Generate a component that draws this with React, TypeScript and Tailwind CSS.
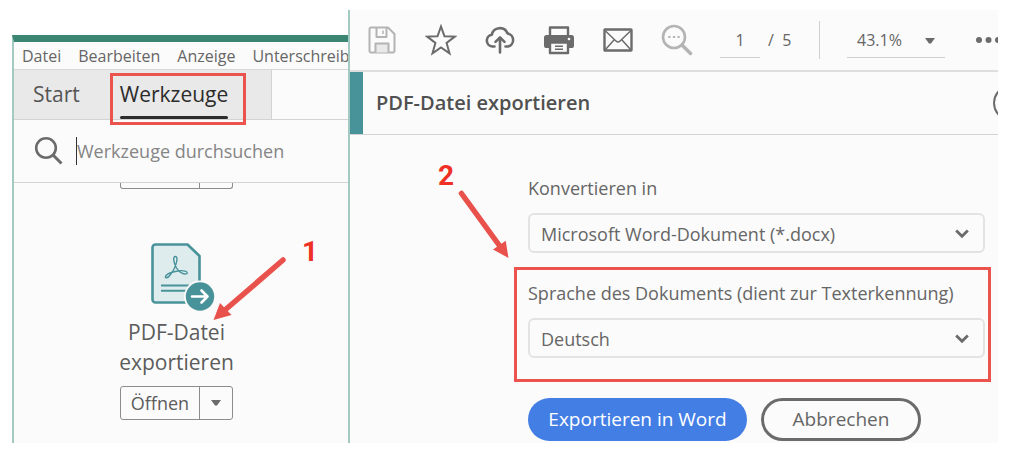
import { useState, type ReactNode } from "react";

interface ISelectProps {
  id: string
  options: string[]
}

const menuItems = ["Datei", "Bearbeiten", "Anzeige", "Unterschreiben"]

const ToolButton = ({ label, children }: { label: string, children: ReactNode }) => (
  <button type="button" aria-label={label} className="flex h-8 w-8 shrink-0 items-center justify-center">
    {children}
  </button>
)

const SaveIcon = () => (
  <svg width="28" height="28" viewBox="0 0 28 28" fill="none" stroke="#b4b4b4" strokeWidth="2" strokeLinejoin="round">
    <path d="M1.5 3a1.5 1.5 0 0 1 1.5-1.5h17L26.5 8v17a1.5 1.5 0 0 1-1.5 1.5H3A1.5 1.5 0 0 1 1.500 25z" />
    <path d="M8.500 1.500v9.500h10v-9.500" />
    <path d="M15 4.500v3.500" strokeWidth="1.500" />
    <path d="M7.500 26.500v-9h13v9" fill="#e9e9e9" />
  </svg>
)

const StarIcon = () => (
  <svg width="32" height="32" viewBox="0 0 32 32" fill="none" stroke="#6b6b6b" strokeWidth="2">
    <path d="M16 2.500l3.500 9.800 10.300.3-8.200 6.400 2.900 10.300L16 23.400l-8.500 5.900 2.900-10.300-8.200-6.400 10.300-.3z" />
  </svg>
)

const CloudIcon = () => (
  <svg width="30" height="28" viewBox="0 0 30 28" fill="none" stroke="#6b6b6b" strokeWidth="2.600" strokeLinecap="round" strokeLinejoin="round">
    <path d="M9.500 20.500H7.200A5.900 5.900 0 0 1 6.800 8.800 8.200 8.200 0 0 1 22.500 7.400a6.700 6.700 0 0 1 .6 13.100H20.500" />
    <path d="M15 26.500V12M10.500 15.800L15 11.300l4.500 4.500" />
  </svg>
)

const PrintIcon = () => (
  <svg width="30" height="30" viewBox="0 0 30 30">
    <path d="M6 10V2.500h18V10" fill="none" stroke="#6b6b6b" strokeWidth="2.400" strokeLinejoin="round" />
    <path d="M2.500 10h25A2.500 2.500 0 0 1 30 12.500V21a2 2 0 0 1-2 2H2a2 2 0 0 1-2-2v-8.500A2.500 2.500 0 0 1 2.500 10z" fill="#6b6b6b" />
    <circle cx="25" cy="14" r="1.300" fill="#fbfbfb" />
    <path d="M6 17.500h18V28H6z" fill="#fbfbfb" stroke="#6b6b6b" strokeWidth="2.400" strokeLinejoin="round" />
    <path d="M11 21.300h8M11 24.300h8" stroke="#6b6b6b" strokeWidth="1.500" />
  </svg>
)

const MailIcon = () => (
  <svg width="30" height="24" viewBox="0 0 30 24" fill="none" stroke="#6b6b6b">
    <rect x="1.500" y="1.500" width="27" height="21" rx="0.500" strokeWidth="2.400" />
    <path d="M2.500 3l10.700 10.200q1.800 1.500 3.600 0L27.500 3M2.500 21.500l8.500-9.500M27.500 21.500L19 12" strokeWidth="1.500" />
  </svg>
)

const FindIcon = () => (
  <svg width="32" height="32" viewBox="0 0 32 32" fill="none" stroke="#b4b4b4">
    <circle cx="13" cy="13" r="11" strokeWidth="2.600" />
    <path d="M21 21l8.500 8.500" strokeWidth="3.500" strokeLinecap="round" />
    <path d="M7.300 13h2.200M11.900 13h2.200M16.500 13h2.200" strokeWidth="2.200" />
  </svg>
)

const ExportPdfIcon = () => (
  <svg width="66" height="70" viewBox="0 0 66 70" fill="none" stroke="#48929a">
    <path d="M5.500 2.500h32L49.500 14v46.500h-44a3 3 0 0 1-3-3v-52a3 3 0 0 1 3-3z" fill="#dfecee" strokeWidth="2.600" strokeLinejoin="round" />
    <path d="M25.500 14.500c-3 0-2 6 1 11.500 3 5 8 7 10.500 5.500 1.500-2-4-3.500-9-2.500-6 .8-10 2.500-12 4.500-2 3 1.500 3.500 4.500-1 3-4 5.500-9 6.300-13.500.3-3 .2-4.500-1.300-4.500z" strokeWidth="1.400" />
    <path d="M11 43.500h28M11 48.800h26" strokeWidth="2" />
    <circle cx="50" cy="54.500" r="16" fill="#fbfbfb" stroke="none" />
    <circle cx="50" cy="54.500" r="14.200" fill="#48929a" stroke="none" />
    <path d="M42 54.500h15M51.500 48.500l6 6-6 6" stroke="#fff" strokeWidth="2.600" strokeLinecap="round" strokeLinejoin="round" />
  </svg>
)

const Triangle = ({ className = "" }: { className?: string }) => (
  <svg width="10" height="6" viewBox="0 0 10 6" fill="#6b6b6b" className={className}>
    <path d="M0 0h10L6 5.500H4z" />
  </svg>
)

const Select = (props: ISelectProps) => {
  const [value, setValue] = useState(props.options[0])
  return (
    <div className="relative">
      <select
        id={props.id}
        value={value}
        onChange={e => setValue(e.target.value)}
        className="block h-10 w-full appearance-none rounded-md border-2 border-[#e3e3e3] bg-[#fbfbfb] pt-0.5 pl-[11px] text-lg text-[#666] outline-none"
      >
        {props.options.map(item => <option key={item}>{item}</option>)}
      </select>
      <svg width="14" height="10" viewBox="0 0 14 10" fill="none" stroke="#6b6b6b" strokeWidth="2.800" className="pointer-events-none absolute top-4 right-4">
        <path d="M1.200 1.500L7 7.300l5.800-5.800" />
      </svg>
    </div>
  )
}

const OpenButton = () => (
  <div className="flex h-[34px] w-[113px] shrink-0 rounded-[3px] border border-[#8c8c8c] text-lg text-[#5c5c5c]">
    <button type="button" className="flex flex-1 items-center justify-center border-r border-[#8c8c8c]">Öffnen</button>
    <button type="button" aria-label="Weitere Optionen" className="flex w-8 items-center justify-center">
      <Triangle />
    </button>
  </div>
)

const ToolsPanel = () => {
  const [query, setQuery] = useState("")
  return (
    <section className="relative flex min-w-0 flex-col overflow-hidden border-t-[7px] border-l-2 border-t-[#3b8573] border-l-[#a3cac2] bg-[#fbfbfb]">
      <nav className="flex h-7 shrink-0 items-center gap-[17px] border-b border-[#d8d8d8] pl-2 text-base text-[#666]">
        {menuItems.map(item => <button type="button" key={item}>{item}</button>)}
      </nav>
      <div className="flex h-[50px] shrink-0 border-b border-[#d3d3d3]">
        <div className="flex w-[258px] shrink-0 border-r border-[#d3d3d3] bg-[#e9e9e9] pl-[19px] text-[21px]">
          <button type="button" className="text-[#555]">Start</button>
          <button type="button" className="relative ml-10 text-[#2c2c2c]">
            Werkzeuge
            <span className="absolute inset-x-0 bottom-0 h-[3px] rounded-full bg-[#2c2c2c]" />
            <span className="absolute top-[3px] -right-[18px] -bottom-1.5 -left-2.5 border-[3px] border-[#ea544d]" />
          </button>
        </div>
      </div>
      <label className="flex h-[63px] shrink-0 items-center gap-3 border-b border-[#d3d3d3] pl-5">
        <svg width="30" height="30" viewBox="0 0 30 30" fill="none" stroke="#6b6b6b">
          <circle cx="12" cy="12" r="9.800" strokeWidth="2.600" />
          <path d="M19 19l8.500 8.500" strokeWidth="3" />
        </svg>
        <input
          aria-label="Werkzeuge durchsuchen"
          value={query}
          onChange={e => setQuery(e.target.value)}
          placeholder="Werkzeuge durchsuchen"
          className="h-7 min-w-0 flex-1 border-l border-[#333] text-lg text-[#333] outline-none placeholder:text-[#858585]"
        />
      </label>
      <div className="flex flex-1 flex-col items-start pb-[22px] pl-[106px]">
        {/* unterer Rand der vorherigen Kachel */}
        <div className="flex h-1.5 w-[113px] justify-end rounded-b-[3px] border border-t-0 border-[#8c8c8c]">
          <div className="w-[33px] border-l border-[#8c8c8c]" />
        </div>
        <div className="mt-[53px] flex w-[113px] flex-col items-center">
          <div className="pl-3"><ExportPdfIcon /></div>
          <p className="mt-[5px] mb-[9px] text-center text-[21px] leading-[30px] text-[#5c5c5c]">PDF-Datei exportieren</p>
          <OpenButton />
        </div>
      </div>
      {/* Schritt 1 */}
      <div className="absolute top-[196px] left-[198px] flex items-start">
        <svg width="76" height="86" viewBox="0 0 76 86" fill="#e9524c">
          <path d="M71 22L13 72" stroke="#e9524c" strokeWidth="5.500" strokeLinecap="round" />
          <path d="M1.500 82L8 65l11.500 12z" />
        </svg>
        <b className="ml-[14px] font-[Roboto,sans-serif] text-[28px] leading-7 text-[#ee3124]">1</b>
      </div>
    </section>
  )
}

const ExportPanel = () => {
  const [page, setPage] = useState("1")
  return (
    <section className="relative min-w-0 overflow-hidden border-l-2 border-[#a3cac2] bg-[#fbfbfb]">
      <div className="flex h-[62px] items-center gap-[27px] border-b-2 border-[#dedede] pl-4 text-[#666]">
        <ToolButton label="Speichern"><SaveIcon /></ToolButton>
        <ToolButton label="Favorit"><StarIcon /></ToolButton>
        <ToolButton label="Hochladen"><CloudIcon /></ToolButton>
        <ToolButton label="Drucken"><PrintIcon /></ToolButton>
        <ToolButton label="E-Mail"><MailIcon /></ToolButton>
        <ToolButton label="Suchen"><FindIcon /></ToolButton>
        <div className="flex shrink-0 items-center gap-2">
          <input
            aria-label="Seite"
            value={page}
            onChange={e => setPage(e.target.value)}
            className="h-9 w-10 border-b border-[#d0d0d0] text-center text-base outline-none"
          />
          <span className="w-6 text-base whitespace-pre">/  5</span>
        </div>
        <div className="h-[38px] w-px shrink-0 bg-[#d0d0d0]" />
        <div className="relative shrink-0">
          <select aria-label="Zoom" className="h-9 w-[98px] appearance-none border-b border-[#d0d0d0] pl-2.5 text-base outline-none">
            <option>43.1%</option>
            <option>100%</option>
          </select>
          <Triangle className="pointer-events-none absolute top-4 right-2.5" />
        </div>
        <button type="button" aria-label="Mehr" className="shrink-0">
          <svg width="34" height="8" viewBox="0 0 34 8" fill="#6b6b6b">
            <circle cx="7" cy="4" r="3" />
            <circle cx="16.500" cy="4" r="3" />
            <circle cx="26" cy="4" r="3" />
          </svg>
        </button>
      </div>
      <header className="flex h-[63px] items-center border-b border-[#d3d3d3]">
        <div className="h-full w-[13px] shrink-0 bg-[#48929a]" />
        <h1 className="ml-[13px] flex-1 text-xl font-semibold text-[#505050]">PDF-Datei exportieren</h1>
        <button type="button" aria-label="Hilfe" className="-mr-[31px] h-9 w-9 shrink-0 rounded-full border-2 border-[#6b6b6b]" />
      </header>
      <form className="pt-10 pr-[7px] pb-0.5 pl-[164px] text-lg text-[#666]" onSubmit={e => e.preventDefault()}>
        <div className="pr-1.5 pl-[14px]">
          <label htmlFor="format" className="mb-[11px] block leading-[27px]">Konvertieren in</label>
          <Select id="format" options={["Microsoft Word-Dokument (*.docx)", "Microsoft Word 97-2003-Dokument (*.doc)"]} />
        </div>
        <div className="mt-[14px] border-[3px] border-[#ea544d] pt-2.5 pr-[3px] pb-[21px] pl-[11px]">
          <label htmlFor="language" className="mb-[11px] block leading-[27px]">Sprache des Dokuments (dient zur Texterkennung)</label>
          <Select id="language" options={["Deutsch", "Englisch"]} />
        </div>
        <div className="mt-4 flex gap-[14px] pl-[14px] text-[19px]">
          <button type="submit" className="h-[43px] w-[219px] rounded-full bg-[#437ee5] text-white">Exportieren in Word</button>
          <button type="button" className="h-[43px] w-[160px] rounded-full border-[3px] border-[#6b6b6b]">Abbrechen</button>
        </div>
      </form>
      {/* Schritt 2 */}
      <div className="absolute top-[152px] left-[88px]">
        <b className="block font-[Roboto,sans-serif] text-[28px] leading-7 text-[#ee3124]">2</b>
        <svg width="56" height="70" viewBox="0 0 56 70" className="ml-5" fill="#e9524c">
          <path d="M3.500 3.500L41 55" stroke="#e9524c" strokeWidth="5.500" strokeLinecap="round" />
          <path d="M50.500 68L35 59.500l12.700-8.800z" />
        </svg>
      </div>
    </section>
  )
}

export default function App() {
  return (
    <main className="bg-white pt-2.5 pr-[26px] pb-7 pl-3 font-['Open_Sans','Noto_Sans',sans-serif]">
      <div className="grid grid-cols-[336fr_650fr]">
        <div className="grid min-w-0 pt-[25px]">
          <ToolsPanel />
        </div>
        <ExportPanel />
      </div>
    </main>
  )
}
